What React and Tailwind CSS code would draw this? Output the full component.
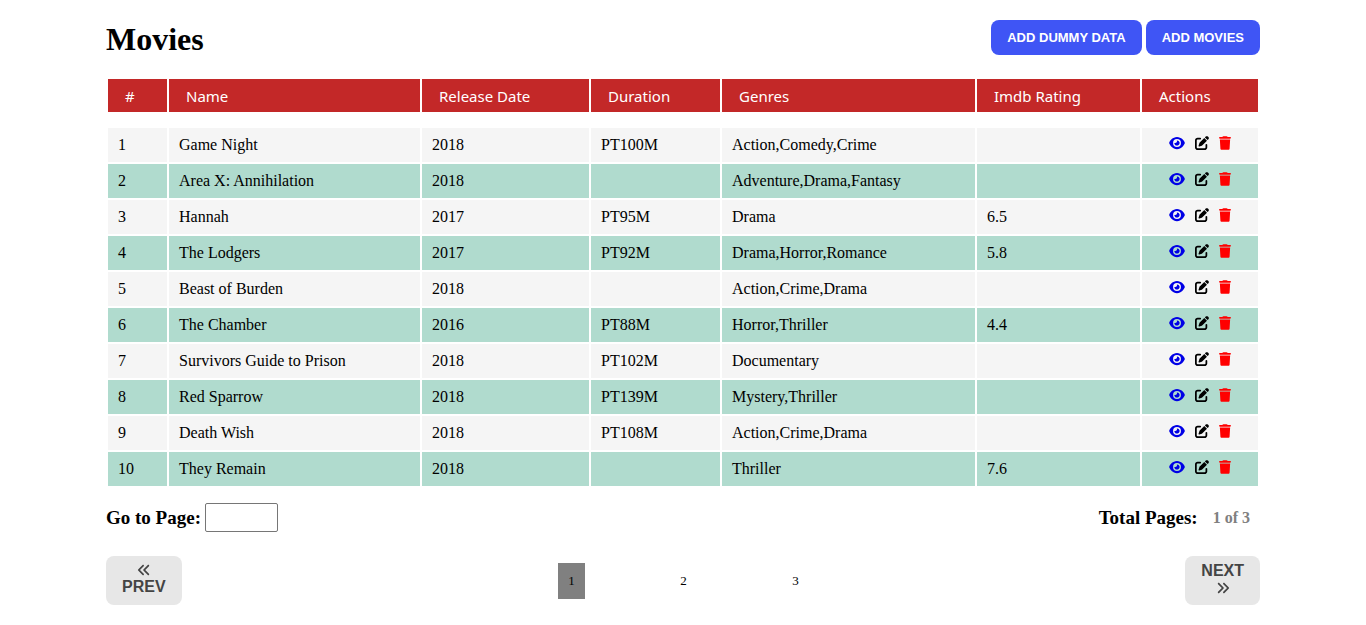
import { FaAnglesLeft, FaAnglesRight, FaEye, FaPenToSquare, FaTrash } from "react-icons/fa6";

const columns = [
  { label: "#", width: "w-[59px]" },
  { label: "Name", width: "w-[251px]" },
  { label: "Release Date", width: "w-[167px]" },
  { label: "Duration", width: "w-[129px]" },
  { label: "Genres", width: "w-[253px]" },
  { label: "Imdb Rating", width: "w-[163px]" },
  { label: "Actions", width: "w-[116px]" },
];

const movies = [
  ["Game Night", "2018", "PT100M", "Action,Comedy,Crime", ""],
  ["Area X: Annihilation", "2018", "", "Adventure,Drama,Fantasy", ""],
  ["Hannah", "2017", "PT95M", "Drama", "6.5"],
  ["The Lodgers", "2017", "PT92M", "Drama,Horror,Romance", "5.8"],
  ["Beast of Burden", "2018", "", "Action,Crime,Drama", ""],
  ["The Chamber", "2016", "PT88M", "Horror,Thriller", "4.4"],
  ["Survivors Guide to Prison", "2018", "PT102M", "Documentary", ""],
  ["Red Sparrow", "2018", "PT139M", "Mystery,Thriller", ""],
  ["Death Wish", "2018", "PT108M", "Action,Crime,Drama", ""],
  ["They Remain", "2018", "", "Thriller", "7.6"],
];

function PrimaryButton({ children }) {
  return (
    <button
      type="button"
      className="h-[35px] rounded-lg bg-[#3f55f5] px-4 font-['Liberation_Sans',sans-serif] text-[13px] font-bold text-white uppercase"
    >
      {children}
    </button>
  );
}

function StepButton({ children }) {
  return (
    <button
      type="button"
      className="flex h-[49px] flex-col items-center justify-center gap-0.5 rounded-lg bg-[#e7e7e7] px-4 pb-[3px] font-['Liberation_Sans',sans-serif] text-base leading-4 font-bold text-[#444]"
    >
      {children}
    </button>
  );
}

function MovieRow({ index, movie }) {
  return (
    <tr className="bg-[#f5f5f5] even:bg-[#b0dbce]">
      <td className="h-[34px] px-2.5">{index}</td>
      {movie.map((value, i) => (
        <td key={i} className="px-2.5">
          {value}
        </td>
      ))}
      <td className="pb-1">
        <div className="flex items-center justify-center gap-2.5">
          <button type="button" aria-label="View" className="text-[#0000e6]">
            <FaEye className="h-3.5 w-4" />
          </button>
          <button type="button" aria-label="Edit" className="text-black">
            <FaPenToSquare className="size-3.5" />
          </button>
          <button type="button" aria-label="Delete" className="text-[#ff0000]">
            <FaTrash className="h-3.5 w-3" />
          </button>
        </div>
      </td>
    </tr>
  );
}

export default function App() {
  return (
    <main className="min-h-screen bg-white px-[106px] pt-5 pb-5 font-['Liberation_Serif',serif] text-base text-black">
      <header className="flex items-start justify-between">
        <h1 className="text-[32px] leading-[38px] font-bold">Movies</h1>
        <div className="flex gap-1">
          <PrimaryButton>Add dummy data</PrimaryButton>
          <PrimaryButton>Add movies</PrimaryButton>
        </div>
      </header>

      <table className="mt-[19px] w-full table-fixed border-separate border-spacing-0.5 text-left leading-5">
        <thead>
          <tr className="bg-[#c32828] font-['Noto_Sans',sans-serif] text-[15px] text-white">
            {columns.map((c) => (
              <th key={c.label} scope="col" className={`h-[33px] px-[17px] font-normal ${c.width}`}>
                {c.label}
              </th>
            ))}
          </tr>
        </thead>
        <tbody className="before:block before:h-3 before:content-['']">
          {movies.map((m, i) => (
            <MovieRow key={m[0]} index={i + 1} movie={m} />
          ))}
        </tbody>
      </table>

      <div className="mt-[15px] flex items-center justify-between text-[19px] leading-7 font-bold">
        <div className="flex items-center gap-1">
          <label htmlFor="page">Go to Page:</label>
          <input
            id="page"
            type="text"
            className="h-[29px] w-[73px] rounded-xs border border-[#767676] px-1 text-base font-normal"
          />
        </div>
        <p className="flex items-center gap-[15px] pr-2.5">
          Total Pages: <span className="text-base text-[#808080]">1 of 3</span>
        </p>
      </div>

      <nav aria-label="Pagination" className="mt-6 flex items-center justify-between">
        <StepButton>
          <FaAnglesLeft className="size-3.5" />
          PREV
        </StepButton>
        <div className="flex gap-[85px] text-[13px]">
          <button type="button" aria-current="page" className="h-9 w-[27px] bg-[#808080]">
            1
          </button>
          <button type="button" className="h-9 w-[27px]">
            2
          </button>
          <button type="button" className="h-9 w-[27px]">
            3
          </button>
        </div>
        <StepButton>
          NEXT
          <FaAnglesRight className="size-3.5" />
        </StepButton>
      </nav>
    </main>
  );
}
